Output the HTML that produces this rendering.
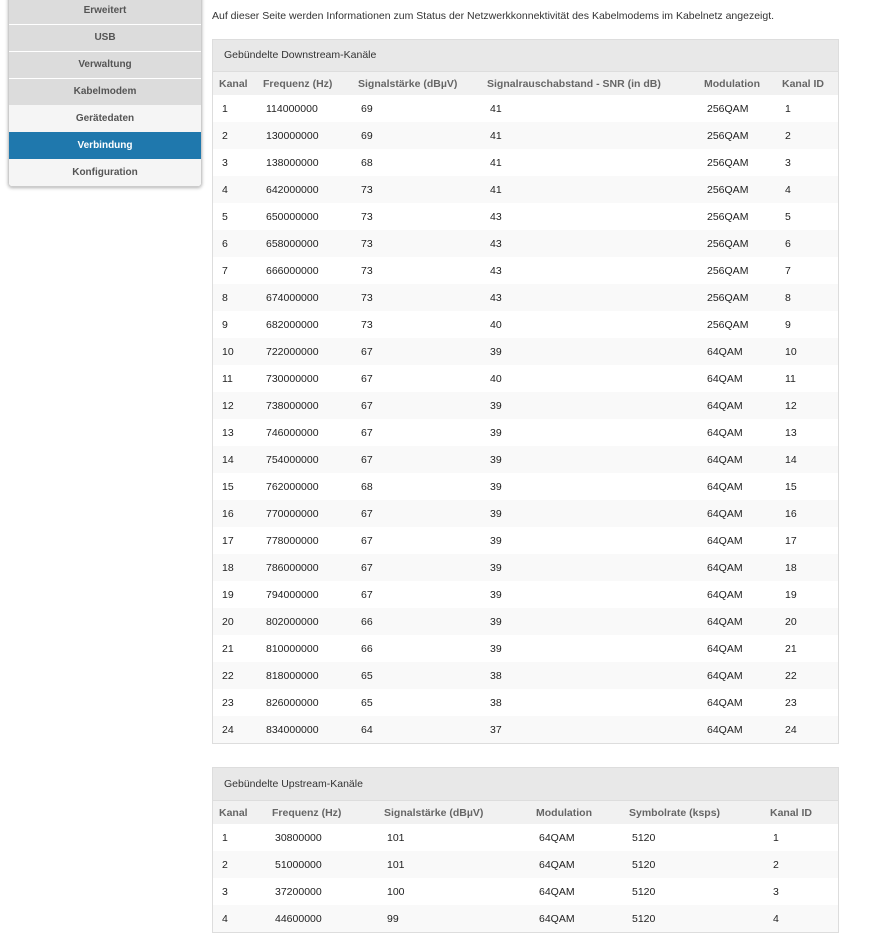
<!DOCTYPE html>
<html><head><meta charset="utf-8"><style>
body{margin:0;background:#fff;font-family:"Liberation Sans",Arial,sans-serif;font-size:10.5px;color:#222;width:869px;height:943px;overflow:hidden;position:relative}
.side{position:absolute;left:8px;top:-4px;width:192px;border:1px solid #ccc;border-radius:0 0 4px 4px;box-shadow:0 1px 3px rgba(0,0,0,.3);overflow:hidden}
.side div{height:26px;line-height:26px;text-align:center;font-weight:bold;color:#555;font-size:10px;border-top:1px solid #fff}
.side .g{background:#dcdcdc}.side .l{background:#f5f5f5;border-top:0;height:27px;line-height:27px}
.side .a{background:#1f78ad;color:#fff}
.intro{position:absolute;left:212px;top:10px;font-size:10.5px;color:#333}
.panel{position:absolute;left:212px;width:625px;border:1px solid #ddd}
.title{background:#e8e8e8;height:32px;line-height:32px;padding-left:11px;font-size:10.5px;color:#333;border-bottom:1px solid #ddd}
table{border-collapse:collapse;width:100%;table-layout:fixed}
th{background:#f1f1f1;height:23px;text-align:left;font-weight:bold;color:#666;padding:0 0 0 6px;font-size:10.5px}
td{height:27px;padding:0 0 0 9px;color:#222}
tr:nth-child(odd) td{background:#f9f9f9}
</style></head><body>
<div class="side">
<div class="g">Erweitert</div><div class="g">USB</div><div class="g">Verwaltung</div><div class="g">Kabelmodem</div>
<div class="l">Gerätedaten</div><div class="l a">Verbindung</div><div class="l">Konfiguration</div>
</div>
<div class="intro">Auf dieser Seite werden Informationen zum Status der Netzwerkkonnektivität des Kabelmodems im Kabelnetz angezeigt.</div>
<div class="panel" style="top:39px">
<div class="title" style="height:31px;line-height:31px">Gebündelte Downstream-Kanäle</div>
<table>
<colgroup><col style="width:44px"><col style="width:95px"><col style="width:129px"><col style="width:217px"><col style="width:78px"><col></colgroup>
<tr><th>Kanal</th><th>Frequenz (Hz)</th><th>Signalstärke (dBµV)</th><th>Signalrauschabstand - SNR (in dB)</th><th>Modulation</th><th>Kanal ID</th></tr>
<tr><td>1</td><td>114000000</td><td>69</td><td>41</td><td>256QAM</td><td>1</td></tr>
<tr><td>2</td><td>130000000</td><td>69</td><td>41</td><td>256QAM</td><td>2</td></tr>
<tr><td>3</td><td>138000000</td><td>68</td><td>41</td><td>256QAM</td><td>3</td></tr>
<tr><td>4</td><td>642000000</td><td>73</td><td>41</td><td>256QAM</td><td>4</td></tr>
<tr><td>5</td><td>650000000</td><td>73</td><td>43</td><td>256QAM</td><td>5</td></tr>
<tr><td>6</td><td>658000000</td><td>73</td><td>43</td><td>256QAM</td><td>6</td></tr>
<tr><td>7</td><td>666000000</td><td>73</td><td>43</td><td>256QAM</td><td>7</td></tr>
<tr><td>8</td><td>674000000</td><td>73</td><td>43</td><td>256QAM</td><td>8</td></tr>
<tr><td>9</td><td>682000000</td><td>73</td><td>40</td><td>256QAM</td><td>9</td></tr>
<tr><td>10</td><td>722000000</td><td>67</td><td>39</td><td>64QAM</td><td>10</td></tr>
<tr><td>11</td><td>730000000</td><td>67</td><td>40</td><td>64QAM</td><td>11</td></tr>
<tr><td>12</td><td>738000000</td><td>67</td><td>39</td><td>64QAM</td><td>12</td></tr>
<tr><td>13</td><td>746000000</td><td>67</td><td>39</td><td>64QAM</td><td>13</td></tr>
<tr><td>14</td><td>754000000</td><td>67</td><td>39</td><td>64QAM</td><td>14</td></tr>
<tr><td>15</td><td>762000000</td><td>68</td><td>39</td><td>64QAM</td><td>15</td></tr>
<tr><td>16</td><td>770000000</td><td>67</td><td>39</td><td>64QAM</td><td>16</td></tr>
<tr><td>17</td><td>778000000</td><td>67</td><td>39</td><td>64QAM</td><td>17</td></tr>
<tr><td>18</td><td>786000000</td><td>67</td><td>39</td><td>64QAM</td><td>18</td></tr>
<tr><td>19</td><td>794000000</td><td>67</td><td>39</td><td>64QAM</td><td>19</td></tr>
<tr><td>20</td><td>802000000</td><td>66</td><td>39</td><td>64QAM</td><td>20</td></tr>
<tr><td>21</td><td>810000000</td><td>66</td><td>39</td><td>64QAM</td><td>21</td></tr>
<tr><td>22</td><td>818000000</td><td>65</td><td>38</td><td>64QAM</td><td>22</td></tr>
<tr><td>23</td><td>826000000</td><td>65</td><td>38</td><td>64QAM</td><td>23</td></tr>
<tr><td>24</td><td>834000000</td><td>64</td><td>37</td><td>64QAM</td><td>24</td></tr>
</table></div>
<div class="panel" style="top:767px">
<div class="title">Gebündelte Upstream-Kanäle</div>
<table>
<colgroup><col style="width:53px"><col style="width:112px"><col style="width:152px"><col style="width:93px"><col style="width:141px"><col></colgroup>
<tr><th>Kanal</th><th>Frequenz (Hz)</th><th>Signalstärke (dBµV)</th><th>Modulation</th><th>Symbolrate (ksps)</th><th>Kanal ID</th></tr>
<tr><td>1</td><td>30800000</td><td>101</td><td>64QAM</td><td>5120</td><td>1</td></tr>
<tr><td>2</td><td>51000000</td><td>101</td><td>64QAM</td><td>5120</td><td>2</td></tr>
<tr><td>3</td><td>37200000</td><td>100</td><td>64QAM</td><td>5120</td><td>3</td></tr>
<tr><td>4</td><td>44600000</td><td>99</td><td>64QAM</td><td>5120</td><td>4</td></tr>
</table></div>
</body></html>
